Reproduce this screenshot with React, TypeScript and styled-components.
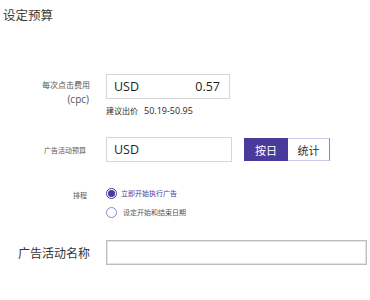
import React from "react";
import styled, { createGlobalStyle } from "styled-components";

const Global = createGlobalStyle`
  html, body { margin: 0; padding: 0; background: #ffffff; }
  body { font-family: "Open Sans", "Noto Sans CJK SC", sans-serif; color: #333; }
`;

const Page = styled.div`
  width: 370px;
  height: 300px;
  box-sizing: border-box;
  padding: 7px 0 0 3px;
  display: flex;
  flex-direction: column;
`;

const Title = styled.div`
  font-family: "Noto Sans CJK SC", sans-serif;
  font-size: 12.5px;
  line-height: 16px;
  color: #3a3a3a;
`;

const Row = styled.div<{ $top: number }>`
  display: grid;
  grid-template-columns: 87px 1fr;
  column-gap: 16px;
  margin-top: ${(p) => p.$top}px;
`;

const Label = styled.div<{ $size: number; $pad?: number; $right?: number; $color?: string }>`
  font-family: "Noto Sans CJK SC", sans-serif;
  font-size: ${(p) => p.$size}px;
  line-height: ${(p) => p.$size + 3}px;
  color: ${(p) => p.$color || "#555"};
  text-align: right;
  padding-top: ${(p) => p.$pad ?? 0}px;
  padding-right: ${(p) => p.$right ?? 0}px;
  align-self: ${(p) => (p.$pad === undefined ? "center" : "start")};
`;

const Cpc = styled.div`
  font-family: "Open Sans", sans-serif;
  font-size: 10px;
  line-height: 14px;
  margin-top: 2px;
  padding-right: 1px;
`;

const Field = styled.div<{ $width: number; $strong?: boolean }>`
  box-sizing: border-box;
  width: ${(p) => p.$width}px;
  height: 25px;
  border: 1px solid ${(p) => (p.$strong ? "#bdbdbd" : "#d6d6d6")};
  ${(p) => (p.$strong ? "box-shadow: inset 0 0 0 1px #e4e4e4;" : "")}
  background: #fff;
  display: flex;
  align-items: center;
  justify-content: space-between;
  padding: 0 9px 0 7px;
  font-family: "Open Sans", sans-serif;
  font-size: 12.5px;
  color: #1e1e1e;
`;

const Hint = styled.div`
  margin-top: 6px;
  display: flex;
  align-items: baseline;
  gap: 6px;
  font-size: 8px;
  line-height: 12px;
  color: #2a2a2a;
  font-family: "Noto Sans CJK SC", sans-serif;
  span:last-child { font-family: "Open Sans", sans-serif; font-size: 9px; }
`;

const Inline = styled.div`
  display: flex;
  align-items: center;
`;

const Toggle = styled.div`
  display: flex;
  margin-left: 12px;
  height: 23px;
`;

const ToggleBtn = styled.div<{ $active?: boolean; $w: number }>`
  box-sizing: border-box;
  width: ${(p) => p.$w}px;
  height: 23px;
  display: flex;
  align-items: center;
  justify-content: center;
  font-family: "Noto Sans CJK SC", sans-serif;
  font-size: 11px;
  color: ${(p) => (p.$active ? "#fff" : "#333")};
  background: ${(p) => (p.$active ? "#4a3a9c" : "#fff")};
  border: 1px solid ${(p) => (p.$active ? "#4a3a9c" : "#cfc8ec")};
  ${(p) => (p.$active ? "" : "border-left: none; border-right-color: #8e80d4;")}
`;

const Radios = styled.div`
  display: flex;
  flex-direction: column;
  gap: 7px;
`;

const RadioRow = styled.div`
  display: flex;
  align-items: center;
  gap: 4px;
  height: 12px;
`;

const Circle = styled.span<{ $on?: boolean }>`
  box-sizing: border-box;
  width: 11px;
  height: 11px;
  border-radius: 50%;
  border: 1px solid ${(p) => (p.$on ? "#4a3a9c" : "#8f84d0")};
  display: flex;
  align-items: center;
  justify-content: center;
  &::after {
    content: "";
    width: 7px;
    height: 7px;
    border-radius: 50%;
    background: ${(p) => (p.$on ? "#4a3a9c" : "transparent")};
  }
`;

const RadioText = styled.span<{ $on?: boolean; $indent?: number }>`
  font-family: "Noto Sans CJK SC", sans-serif;
  font-size: 7px;
  line-height: 12px;
  color: ${(p) => (p.$on ? "#4a3a9c" : "#555")};
  margin-left: ${(p) => p.$indent ?? 0}px;
`;

export default function App() {
  return (
    <Page>
      <Global />
      <Title>设定预算</Title>

      <Row $top={51}>
        <Label $size={8} $pad={5}>
          每次点击费用
          <Cpc>(cpc)</Cpc>
        </Label>
        <div>
          <Field $width={124}>
            <span>USD</span>
            <span>0.57</span>
          </Field>
          <Hint>
            <span>建议出价</span>
            <span>50.19-50.95</span>
          </Hint>
        </div>
      </Row>

      <Row $top={20}>
        <Label $size={7} $right={4}>广告活动预算</Label>
        <Inline>
          <Field $width={126}>
            <span>USD</span>
          </Field>
          <Toggle>
            <ToggleBtn $active $w={44}>按日</ToggleBtn>
            <ToggleBtn $w={42}>统计</ToggleBtn>
          </Toggle>
        </Inline>
      </Row>

      <Row $top={25}>
        <Label $size={7} $pad={3} $right={3}>排程</Label>
        <Radios>
          <RadioRow>
            <Circle $on />
            <RadioText $on>立即开始执行广告</RadioText>
          </RadioRow>
          <RadioRow>
            <Circle />
            <RadioText $indent={2}>设定开始和结束日期</RadioText>
          </RadioRow>
        </Radios>
      </Row>

      <Row $top={22}>
        <Label $size={12} $right={-3} $color="#333">广告活动名称</Label>
        <Field $width={261} $strong />
      </Row>
    </Page>
  );
}
